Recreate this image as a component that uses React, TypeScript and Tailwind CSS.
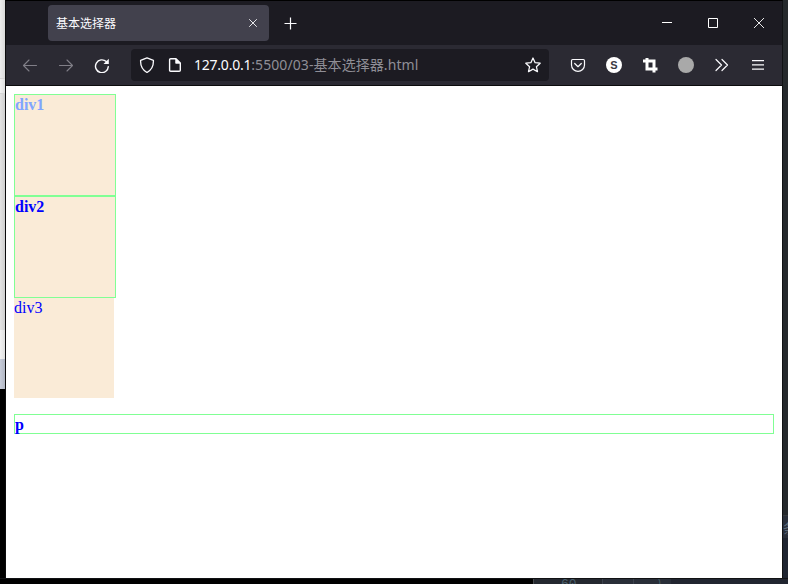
import React from 'react';

const icon = 'block shrink-0';

function TabStrip() {
  return (
    <header className="flex h-11 shrink-0 items-center bg-[#1c1b22] pl-[42px] pt-px">
      <div className="mb-px flex h-9 w-[221px] items-center justify-between rounded bg-[#42414d] pl-2 pr-[11px] text-[#fbfbfe]">
        <span className="text-[12px] leading-4 font-['Noto_Sans_CJK_SC',sans-serif]">基本选择器</span>
        <svg className={icon} width="10" height="10" viewBox="0 0 10 10" stroke="#e6e6ea" strokeWidth="1" fill="none">
          <path d="M1.2 1.2 8.8 8.8M8.8 1.2 1.2 8.8" />
        </svg>
      </div>
      <svg className={`${icon} mb-px ml-[14px]`} width="14" height="14" viewBox="0 0 14 14" stroke="#fbfbfe" strokeWidth="1.2" fill="none">
        <path d="M7.5 1.5v12M1.5 7.5h12" />
      </svg>
      <div className="mb-px ml-auto mr-[18px] flex items-center gap-9">
        <svg className={icon} width="10" height="10" viewBox="0 0 10 10"><path d="M0 4h10v1H0z" fill="#fff" /></svg>
        <svg className={icon} width="10" height="10" viewBox="0 0 10 10" fill="none" stroke="#fff"><path d="M.5.5h9v9h-9z" /></svg>
        <svg className={icon} width="10" height="10" viewBox="0 0 10 10" fill="none" stroke="#fff" strokeWidth=".9"><path d="M0 0l10 10M10 0 0 10" /></svg>
      </div>
    </header>
  );
}

function Toolbar() {
  return (
    <nav className="flex h-10 shrink-0 items-center bg-[#2b2a33] text-[#fbfbfe]">
      <div className="flex w-[125px] shrink-0 items-center gap-5 pl-4">
        <svg className={icon} width="16" height="16" viewBox="0 0 16 16" fill="none" stroke="#817f88" strokeWidth="1.1" strokeLinecap="round" strokeLinejoin="round">
          <path d="M14.5 8.5h-13M7 3 1.5 8.5 7 14" />
        </svg>
        <svg className={icon} width="16" height="16" viewBox="0 0 16 16" fill="none" stroke="#817f88" strokeWidth="1.1" strokeLinecap="round" strokeLinejoin="round">
          <path d="M1.5 8.5h13M9 3l5.500 5.500L9 14" />
        </svg>
        <svg className={icon} width="16" height="16" viewBox="0 0 16 16" fill="none" stroke="#fbfbfe" strokeWidth="1.4" strokeLinecap="round">
          <path d="M14.300 9.600A6.400 6.400 0 1 1 12.300 4.600" />
          <path d="M14.800 1.800v5.300H9.500z" fill="#fbfbfe" stroke="none" />
        </svg>
      </div>
      <div className="flex h-8 w-[418px] shrink-0 items-center rounded bg-[#1c1b22] pl-2 pr-2">
        <svg className={icon} width="16" height="16" viewBox="0 0 16 16" fill="none" stroke="#fbfbfe" strokeWidth="1.3" strokeLinejoin="round">
          <path d="M8 .9 14.4 3.4q.4 8.4-6.4 12.1Q1.200 11.800 1.600 3.400z" />
        </svg>
        <svg className={`${icon} ml-3`} width="16" height="16" viewBox="0 0 16 16" fill="none" stroke="#fbfbfe" strokeWidth="1.4" strokeLinejoin="round">
          <path d="M3.700 1.700h5.300l4.300 4.300v7.200q0 1.100-1.100 1.100H3.700q-1.100 0-1.100-1.100V2.800q0-1.100 1.100-1.100z" />
          <path d="M8.700 1.700V6.300h4.600z" fill="#fbfbfe" strokeWidth=".8" />
        </svg>
        <span className="ml-[11px] whitespace-nowrap text-[14px] leading-5 tracking-[0.08px] text-[#8f8e96] font-['Noto_Sans','Noto_Sans_CJK_SC',sans-serif]">
          <span className="tracking-[-0.23px] text-[#fbfbfe]">127.0.0.1</span>:5500/03-基本选择器.html
        </span>
        <svg className={`${icon} ml-auto`} width="16" height="16" viewBox="0 0 16 16" fill="none" stroke="#fbfbfe" strokeWidth="1.250" strokeLinejoin="round">
          <path d="m8 1 2.100 4.700 5.100.5-3.800 3.500 1.100 5L8 12.100l-4.500 2.600 1.100-5L.8 6.200l5.100-.5z" />
        </svg>
      </div>
      <div className="ml-[21px] flex items-center gap-5">
        <svg className={icon} width="16" height="16" viewBox="0 0 16 16" fill="none" stroke="#fbfbfe" strokeWidth="1.200" strokeLinecap="round" strokeLinejoin="round">
          <path d="M2.700 2.500h10.600q1.200 0 1.200 1.200v4.200a6.500 6.500 0 0 1-13 0V3.700Q1.500 2.500 2.700 2.500z" />
          <path d="m4.700 6.500 3.300 3.200 3.300-3.200" />
        </svg>
        <span className="flex size-4 items-center justify-center rounded-full bg-white text-[11px] font-bold leading-4 text-[#3a3942] font-['Liberation_Sans',sans-serif]">S</span>
        <svg className={icon} width="16" height="16" viewBox="0 0 16 16" fill="none" stroke="#fff" strokeWidth="3">
          <path d="M1 4H12V15.500M5 1V12H15.500" />
        </svg>
        <span className="size-4 rounded-full bg-[#a9a9a9]" />
        <svg className={icon} width="16" height="16" viewBox="0 0 16 16" fill="none" stroke="#fbfbfe" strokeWidth="1.200" strokeLinecap="round" strokeLinejoin="round">
          <path d="m2 2.500 5.500 5.500L2 13.500M8 2.500l5.500 5.500L8 13.500" />
        </svg>
        <svg className={icon} width="16" height="16" viewBox="0 0 16 16" fill="#fbfbfe">
          <path d="M2 3h12v1.200H2zM2 7.200h12v1.200H2zM2 11.500h12v1.200H2z" />
        </svg>
      </div>
    </nav>
  );
}

function Page() {
  return (
    <main className="min-h-0 flex-1 border-t border-[#0c0c0d] bg-white p-2 text-[16px] leading-[18px] text-[#0000ff] font-['Liberation_Serif',serif]">
      <div className="box-content h-[99px] w-[100px] border border-[#80ff94] bg-[#faebd7] pt-px font-bold text-[#80a5ff]">div1</div>
      <div className="box-content h-[99px] w-[100px] border border-[#80ff94] bg-[#faebd7] pt-px font-bold">div2</div>
      <div className="h-[100px] w-[100px] bg-[#faebd7] pt-px">div3</div>
      <p className="mt-4 h-5 border border-[#80ff94] pt-px font-bold">p</p>
    </main>
  );
}

function BottomEdge() {
  return (
    <div className="flex h-[6px] shrink-0 overflow-hidden border-t border-[#111214] bg-[#212530]">
      <div className="w-[533px] shrink-0 bg-black" />
      <div className="w-[69px] shrink-0 border-l border-[#45484b] bg-[#24282f] pl-[27px] text-[13px] leading-[12px] text-[#4b606e] font-['Liberation_Mono',monospace]">60</div>
      <div className="w-[31px] shrink-0 border-l border-[#3b414c] bg-[#292e38]" />
      <div className="w-[38px] shrink-0 border-l border-[#3b414c] bg-[#292e38] pl-[22px] text-[10px] leading-[10px] text-[#46606a] font-['Liberation_Mono',monospace]">)</div>
    </div>
  );
}

export default function App() {
  return (
    <div className="flex h-[584px] w-[788px] flex-col overflow-hidden bg-black">
      <div className="flex h-[578px] shrink-0">
        <aside className="flex w-[5px] shrink-0 flex-col">
          <div className="h-[79px] border-b border-[#d5d5d5] bg-gradient-to-r from-[#ededed] to-[#d9d9d9]" />
          <div className="h-[15px] border-b border-[#d5d5d5] bg-gradient-to-r from-[#f2f2f2] to-[#dedede]" />
          <div className="h-[236px] bg-gradient-to-r from-[#e4e4e4] to-[#cfcfcf]" />
          <div className="h-[29px] bg-gradient-to-r from-[#f2f2f2] to-[#dfdfdf]" />
          <div className="h-[30px] bg-gradient-to-r from-[#c7ccd9] to-[#b1b6c3]" />
        </aside>
        <section className="flex w-[778px] shrink-0 flex-col border-l border-r border-t border-l-[#0b0b0c] border-r-[#111315] border-t-black">
          <TabStrip />
          <Toolbar />
          <Page />
        </section>
        <aside className="flex w-[5px] shrink-0 flex-col bg-[#25292c]">
          <div className="h-[516px] border-b border-[#363a3d]" />
          <div className="h-[22px] overflow-hidden whitespace-nowrap bg-[#292f3a] pt-[4px] text-[13px] leading-4 text-[#5b6878] font-['Noto_Sans_CJK_SC',sans-serif]">条</div>
          <div className="h-10 bg-[#1f2531]" />
        </aside>
      </div>
      <BottomEdge />
    </div>
  );
}
